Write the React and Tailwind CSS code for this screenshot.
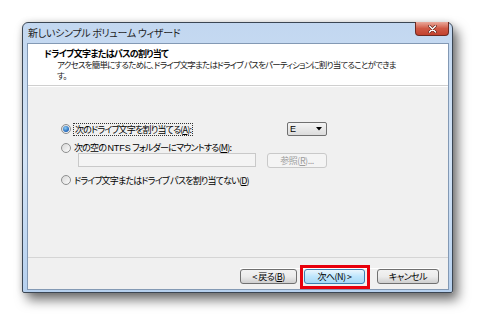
import * as React from "react";

const jp = "font-['Noto_Sans_CJK_JP','Noto_Sans',sans-serif] [font-feature-settings:'palt']";

function cx(...classes) {
  return classes.filter(Boolean).join(" ");
}

function Radio({ checked = false }) {
  return (
    <span className="flex h-[10px] w-[10px] shrink-0 items-center justify-center rounded-full border border-[#8e8f8f] bg-gradient-to-br from-[#d8d8d8] to-[#fbfbfb]">
      {checked && <span className="h-[6px] w-[6px] rounded-full bg-[radial-gradient(circle_at_40%_35%,#8ccdf6,#1f64b8_70%)]" />}
    </span>
  );
}

function Key({ children }) {
  return <span className="underline underline-offset-1">{children}</span>;
}

function WinButton({ children, primary = false, disabled = false, className = "" }) {
  return (
    <button
      type="button"
      className={cx(
        "flex h-[15px] items-center justify-center rounded-[3px] border text-[9px] leading-none tracking-[-0.5px]",
        primary
          ? "border-[#3c7fb1] bg-gradient-to-b from-[#eaf6fd] via-[#bee6fd] to-[#a7d9f5] text-black"
          : disabled
            ? "border-[#c9c9c9] bg-[#f4f4f4] text-[#9c9c9c]"
            : "border-[#707070] bg-gradient-to-b from-[#f2f2f2] via-[#ebebeb] to-[#cfcfcf] text-black",
        jp,
        className
      )}
    >
      {children}
    </button>
  );
}

export default function App() {
  return (
    <div className="h-[336px] w-[496px] overflow-hidden bg-white pl-[22px] pt-[22px]">
      <div className="flex h-[271px] w-[431px] flex-col rounded-t-[6px] rounded-b-[2px] border border-[#3b4653] bg-gradient-to-b from-[#c2d7f0] via-[#d3e4f7] to-[#b6d0ee] pb-[4px] pl-[4px] pr-[3px] shadow-[5px_7px_12px_rgba(0,0,0,0.55),0_0_6px_rgba(0,0,0,0.15)]">
        <div className="flex h-[20px] shrink-0 items-start justify-between">
          <span className={cx("mt-[4px] pl-[1px] text-[10px] leading-[12px] tracking-[-0.3px] text-[#1e1e1e]", jp)}>新しいシンプル ボリューム ウィザード</span>
          <div className="-mt-[1px] flex h-[14px] w-[34px] items-center justify-center rounded-b-[4px] border border-t-0 border-[#6d2a22] bg-gradient-to-b from-[#e9a99c] via-[#cf5945] to-[#c2412e]">
            <svg width="9" height="8" viewBox="0 0 9 8">
              <path d="M1.5 1 L7.5 7 M7.5 1 L1.5 7" stroke="#5a1a12" strokeWidth="2.6" strokeLinecap="round" />
              <path d="M1.5 1 L7.5 7 M7.5 1 L1.5 7" stroke="#ffffff" strokeWidth="1.5" strokeLinecap="round" />
            </svg>
          </div>
        </div>

        <div className="flex flex-1 flex-col border border-[#8399b4] bg-[#f0f0f0]">
          <div className={cx("h-[42px] shrink-0 border-b border-[#cfcfcf] bg-white pl-[16px] pt-[4px] text-black", jp)}>
            <p className="text-[9px] font-bold leading-[11px] tracking-[-0.7px]">ドライブ文字またはパスの割り当て</p>
            <p className="whitespace-nowrap pl-[13px] text-[8.5px] leading-[11px] tracking-[-0.8px] text-[#222]">
              アクセスを簡単にするために、ドライブ文字またはドライブ パスをパーティションに割り当てることができま
              <br />
              す。
            </p>
          </div>

          <div className={cx("h-[171px] shrink-0 border-t border-white pl-[33px] text-[9px] leading-none tracking-[-0.8px] text-black", jp)}>
            <div className="w-[266px]">
              <div className="mt-[35px] flex h-[14px] items-center">
                <Radio checked />
                <span className="ml-[2px] border border-dotted border-[#333] px-[1px] py-[1px]">
                  次のドライブ文字を割り当てる(<Key>A</Key>):
                </span>
                <div className="ml-auto flex h-[14px] w-[40px] items-center justify-between rounded-[2px] border border-[#707070] bg-gradient-to-b from-[#f4f4f4] to-[#dcdcdc] pl-[2px] pr-[4px]">
                  <span className="font-['Liberation_Sans',sans-serif] text-[9px] tracking-normal">E</span>
                  <svg width="6" height="4" viewBox="0 0 6 4">
                    <path d="M0 0 H6 L3 3.5 Z" fill="#000" />
                  </svg>
                </div>
              </div>
              <div className="mt-[6px] flex h-[12px] items-center">
                <Radio />
                <span className="ml-[3px]">
                  次の空の <span className="font-['Liberation_Sans',sans-serif] tracking-normal">NTFS</span> フォルダーにマウントする(<Key>M</Key>):
                </span>
              </div>
              <div className="-mt-[1px] ml-[17px] flex h-[14px] items-center">
                <div className="h-[14px] w-[178px] border border-[#c9c9c9] bg-[#f4f4f4]" />
                <WinButton disabled className="ml-[11px] h-[14px] w-[60px]">
                  参照(<Key>R</Key>)...
                </WinButton>
              </div>
              <div className="mt-[7px] flex h-[12px] items-center">
                <Radio />
                <span className="ml-[3px]">
                  ドライブ文字またはドライブ パスを割り当てない(<Key>D</Key>)
                </span>
              </div>
            </div>
          </div>

          <div className="flex flex-1 items-start justify-end border-t border-[#d5d5d5] pr-[9px] pt-[10px]">
            <div className="flex items-start border-t border-white">
              <WinButton className="w-[57px]">
                &lt; 戻る(<Key>B</Key>)
              </WinButton>
              <div className="-mt-[4px] ml-[3px] border-[3px] border-[#e8000b] pb-[2px] pl-[1px] pr-[2px] pt-[1px]">
                <WinButton primary className="w-[61px]">
                  次へ(N) &gt;
                </WinButton>
              </div>
              <WinButton className="ml-[7px] w-[62px]">キャンセル</WinButton>
            </div>
          </div>
        </div>
      </div>
    </div>
  );
}
